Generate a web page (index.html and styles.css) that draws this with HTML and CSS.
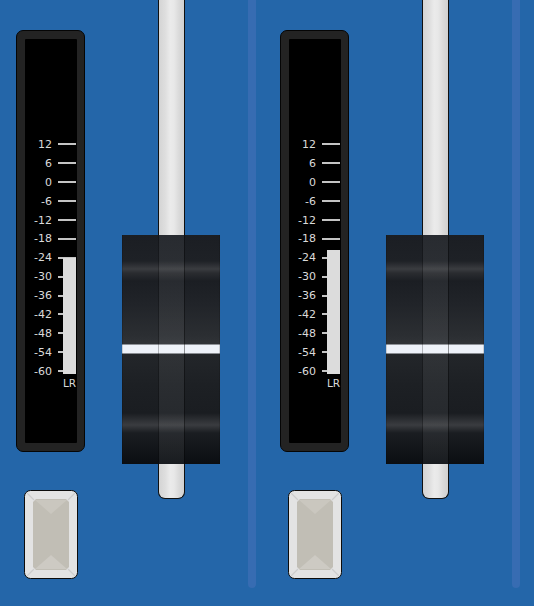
FILE: index.html
```html
<!DOCTYPE html>
<html lang="en">
<head>
<meta charset="utf-8">
<title>Mixer</title>
<link rel="stylesheet" href="styles.css">
</head>
<body>
<div class="mixer">
  <!-- channel 1 -->
  <section class="strip">
    <div class="meter-col">
      <div class="meter">
        <div class="meter-face">
          <ul class="scale">
            <li><span class="lbl">12</span><i class="tick"></i></li>
            <li><span class="lbl">6</span><i class="tick"></i></li>
            <li><span class="lbl">0</span><i class="tick"></i></li>
            <li><span class="lbl">-6</span><i class="tick"></i></li>
            <li><span class="lbl">-12</span><i class="tick"></i></li>
            <li><span class="lbl">-18</span><i class="tick"></i></li>
            <li><span class="lbl">-24</span><i class="tick"></i></li>
            <li><span class="lbl">-30</span><i class="tick"></i></li>
            <li><span class="lbl">-36</span><i class="tick"></i></li>
            <li><span class="lbl">-42</span><i class="tick"></i></li>
            <li><span class="lbl">-48</span><i class="tick"></i></li>
            <li><span class="lbl">-54</span><i class="tick"></i></li>
            <li><span class="lbl">-60</span><i class="tick"></i></li>
          </ul>
          <div class="level" style="height:116px"></div>
          <span class="lr">LR</span>
        </div>
      </div>
      <button class="sel" type="button" aria-label="Select channel 1">
        <svg width="54" height="89" viewBox="0 0 54 89">
          <rect x="0.5" y="0.5" width="53" height="88" rx="6" fill="#e3e3e3" stroke="#0c0c0c"/>
          <path d="M3 3 L10 10 M51 3 L44 10 M3 86 L10 79 M51 86 L44 79" stroke="#cdcdcd" stroke-width="1.2"/>
          <path d="M12 9 H42 L45 12 V77 L42 80 H12 L9 77 V12 Z" fill="#c1beb5"/>
          <path d="M11 10 H43 L27 24 Z" fill="#cac7bf"/>
          <path d="M11 79 H43 L27 65 Z" fill="#cdcac3"/>
        </svg>
      </button>
    </div>
    <div class="fader">
      <div class="track"></div>
      <div class="knob"></div>
    </div>
    <div class="divider"></div>
  </section>

  <!-- channel 2 -->
  <section class="strip">
    <div class="meter-col">
      <div class="meter">
        <div class="meter-face">
          <ul class="scale">
            <li><span class="lbl">12</span><i class="tick"></i></li>
            <li><span class="lbl">6</span><i class="tick"></i></li>
            <li><span class="lbl">0</span><i class="tick"></i></li>
            <li><span class="lbl">-6</span><i class="tick"></i></li>
            <li><span class="lbl">-12</span><i class="tick"></i></li>
            <li><span class="lbl">-18</span><i class="tick"></i></li>
            <li><span class="lbl">-24</span><i class="tick"></i></li>
            <li><span class="lbl">-30</span><i class="tick"></i></li>
            <li><span class="lbl">-36</span><i class="tick"></i></li>
            <li><span class="lbl">-42</span><i class="tick"></i></li>
            <li><span class="lbl">-48</span><i class="tick"></i></li>
            <li><span class="lbl">-54</span><i class="tick"></i></li>
            <li><span class="lbl">-60</span><i class="tick"></i></li>
          </ul>
          <div class="level" style="height:124px"></div>
          <span class="lr">LR</span>
        </div>
      </div>
      <button class="sel" type="button" aria-label="Select channel 2">
        <svg width="54" height="89" viewBox="0 0 54 89">
          <rect x="0.5" y="0.5" width="53" height="88" rx="6" fill="#e3e3e3" stroke="#0c0c0c"/>
          <path d="M3 3 L10 10 M51 3 L44 10 M3 86 L10 79 M51 86 L44 79" stroke="#cdcdcd" stroke-width="1.2"/>
          <path d="M12 9 H42 L45 12 V77 L42 80 H12 L9 77 V12 Z" fill="#c1beb5"/>
          <path d="M11 10 H43 L27 24 Z" fill="#cac7bf"/>
          <path d="M11 79 H43 L27 65 Z" fill="#cdcac3"/>
        </svg>
      </button>
    </div>
    <div class="fader">
      <div class="track"></div>
      <div class="knob"></div>
    </div>
    <div class="divider"></div>
  </section>
</div>
</body>
</html>
```

FILE: styles.css
```css
html, body {
  margin: 0;
  padding: 0;
}

body {
  width: 534px;
  height: 606px;
  overflow: hidden;
  background: #2466a9;
  font-family: "DejaVu Sans", "Liberation Sans", sans-serif;
}

.mixer {
  display: flex;
}

.strip {
  flex: 0 0 264px;
  width: 264px;
  display: flex;
  align-items: flex-start;
  padding-left: 16px;
  box-sizing: border-box;
}

/* meter + select button column */
.meter-col {
  width: 69px;
  display: flex;
  flex-direction: column;
  padding-top: 30px;
  gap: 38px;
}

.meter {
  height: 422px;
  box-sizing: border-box;
  border: 1px solid #050505;
  border-radius: 7px;
  background: #232323;
  padding: 8px 7px 8px 8px;
}

.meter-face {
  position: relative;
  height: 100%;
  background: #000;
  border-radius: 1px;
}

.scale {
  list-style: none;
  margin: 0;
  padding: 96px 0 0 0;
}

.scale li {
  height: 18.9px;
  display: flex;
  align-items: center;
}

.lbl {
  width: 27px;
  text-align: right;
  font-size: 11px;
  line-height: 1;
  color: #dadada;
}

.tick {
  margin-left: 6px;
  width: 18px;
  height: 2px;
  background: #c4c4c4;
}

/* signal level bar, drawn over the scale ticks */
.level {
  position: absolute;
  left: 38px;
  bottom: 69px;
  width: 13px;
  background: #dcdcdc;
}

.lr {
  position: absolute;
  left: 37px;
  top: 339px;
  width: 15px;
  text-align: center;
  font-size: 10.5px;
  line-height: 1;
  color: #dadada;
}

.sel {
  margin: 0 0 0 8px;
  padding: 0;
  border: 0;
  background: none;
  width: 54px;
  height: 89px;
  display: block;
}

.sel svg {
  display: block;
}

/* fader: track with the cap stacked on top */
.fader {
  margin-left: 37px;
  width: 98px;
  display: grid;
}

.track,
.knob {
  grid-area: 1 / 1;
}

.track {
  margin-left: 36px;
  width: 27px;
  height: 499px;
  box-sizing: border-box;
  border: 1px solid #101010;
  border-top: 0;
  border-radius: 0 0 7px 7px;
  background: linear-gradient(90deg, #d4d4d4 0, #dedede 25%, #ebebeb 45%, #e8e8e8 60%, #dadada 80%, #d0d0d0 100%);
}

.knob {
  margin-top: 235px;
  height: 229px;
  width: 98px;
  background:
    linear-gradient(90deg,
      rgba(0, 0, 0, 0.15) 0 1px,
      transparent 1px 36px,
      rgba(0, 0, 0, 0.25) 36px 37px,
      rgba(255, 255, 255, 0.06) 37px 62px,
      rgba(0, 0, 0, 0.4) 62px 63px,
      transparent 63px 97px,
      rgba(0, 0, 0, 0.15) 97px),
    linear-gradient(180deg,
      #1b1e23 0,
      #1e2126 26px,
      #3a3c40 34px,
      #2a2c30 38px,
      #1b1e23 46px,
      #212429 70px,
      #2b2e32 100px,
      #303337 109px,
      #eef2f9 110px,
      #eef2f9 118px,
      #23262a 119px,
      #1d2024 150px,
      #1a1d21 178px,
      #3a3c40 190px,
      #1a1d21 198px,
      #0b0e12 229px);
}

.divider {
  margin-left: 28px;
  width: 8px;
  height: 588px;
  border-radius: 0 0 4px 4px;
  background: #376cb2;
}
```
